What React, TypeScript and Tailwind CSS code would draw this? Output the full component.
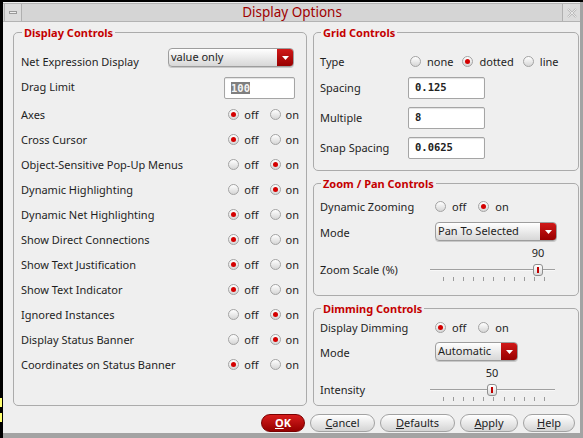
import React from "react";

const Radio = ({ checked }: { checked?: boolean }) => (
  <span className="w-[11px] h-[11px] rounded-full border border-[#a3a3a3] bg-linear-to-b from-white to-[#d6d6d6] flex items-center justify-center shrink-0">
    {checked && <span className="w-[5px] h-[5px] rounded-full bg-[#d40000]" />}
  </span>
);

const RadioGroup = ({
  options,
  value,
  gap = "gap-[11px]",
  inner = "gap-[5px]",
}: {
  options: string[];
  value: string;
  gap?: string;
  inner?: string;
}) => (
  <div className={`flex items-center ${gap}`}>
    {options.map((o) => (
      <div key={o} className={`flex items-center ${inner}`}>
        <Radio checked={o === value} />
        <span className="leading-[15px]">{o}</span>
      </div>
    ))}
  </div>
);

const Dropdown = ({ text, w }: { text: string; w: string }) => (
  <div className={`h-[19px] ${w} rounded-[4px] border border-[#9d9d9d] bg-linear-to-b from-white to-[#d7d7d7] flex items-stretch overflow-hidden shadow-[0_1px_0_#c8c8c8]`}>
    <span className="flex-1 pl-[2px] leading-[15px]">{text}</span>
    <span className="w-[16px] bg-linear-to-b from-[#d01818] to-[#980000] flex items-center justify-center">
      <svg width="7" height="4" viewBox="0 0 7 4">
        <path d="M0 0H7L3.5 4Z" fill="white" />
      </svg>
    </span>
  </div>
);

const Input = ({ text, w, selected }: { text: string; w: string; selected?: boolean }) => (
  <div className={`h-[22px] ${w} bg-white border border-[#a5a5a5] rounded-[2px] flex items-center pl-[6px] font-['DejaVu_Sans_Mono',monospace] text-[10.5px] font-bold text-[#222] shadow-[inset_0_1px_1px_rgba(0,0,0,0.12)]`}>
    {selected ? (
      <span className="bg-[#7f7f7f] text-[#f4f4f4] leading-[12px] px-[0px]">{text}</span>
    ) : (
      <span>{text}</span>
    )}
  </div>
);

const Slider = ({ value, pos }: { value: string; pos: number }) => (
  <div className="relative w-[125px] h-[38px]">
    <div
      className="absolute top-0 w-[20px] text-center leading-[13px]"
      style={{ left: pos - 10 }}
    >
      {value}
    </div>
    <div className="absolute left-0 right-0 top-[23px] h-[1px] bg-[#a0a0a0]" />
    <div className="absolute left-0 right-0 top-[24px] h-[1px] bg-[#f8f8f8]" />
    <div
      className="absolute top-[18px] w-[10px] h-[12px] rounded-[3px] border border-[#8e8e8e] bg-linear-to-b from-white to-[#d9d9d9] flex items-center justify-center"
      style={{ left: pos - 5 }}
    >
      <span className="w-[2px] h-[6px] bg-[#c00000]" />
    </div>
    <div className="absolute top-[31px] left-[13px] w-[102px] h-[4px] flex justify-between">
      {Array.from({ length: 11 }).map((_, i) => (
        <span key={i} className="w-[1px] h-[4px] bg-[#9a9a9a]" />
      ))}
    </div>
  </div>
);

const BinRow = ({ label, value }: { label: string; value: "off" | "on" }) => (
  <div className="h-[25px] flex items-center justify-between">
    <span className="mt-[2px]">{label}</span>
    <RadioGroup options={["off", "on"]} value={value} />
  </div>
);

const Legend = ({ children }: { children: React.ReactNode }) => (
  <legend className="px-[2px] ml-[1px] text-[11px] font-bold text-[#c40000] leading-[15px]">
    {children}
  </legend>
);

const Button = ({
  label,
  u,
  w,
  primary,
}: {
  label: string;
  u: number;
  w: string;
  primary?: boolean;
}) => (
  <div
    className={`h-[18px] ${w} rounded-full flex items-center justify-center border ${
      primary
        ? "bg-linear-to-b from-[#d81c1c] to-[#950000] border-[#7a0000] text-white font-bold"
        : "bg-linear-to-b from-white to-[#d4d4d4] border-[#a2a2a2] text-[#222]"
    }`}
  >
    <span>
      {label.slice(0, u)}
      <span className="underline">{label[u]}</span>
      {label.slice(u + 1)}
    </span>
  </div>
);

const leftRows: [string, "off" | "on"][] = [
  ["Axes", "off"],
  ["Cross Cursor", "off"],
  ["Object-Sensitive Pop-Up Menus", "on"],
  ["Dynamic Highlighting", "on"],
  ["Dynamic Net Highlighting", "off"],
  ["Show Direct Connections", "off"],
  ["Show Text Justification", "off"],
  ["Show Text Indicator", "off"],
  ["Ignored Instances", "on"],
  ["Display Status Banner", "on"],
  ["Coordinates on Status Banner", "off"],
];

export default function App() {
  return (
    <div className="w-[583px] h-[438px] bg-black flex font-['Noto_Sans',sans-serif] text-[11px] text-[#1e1e1e] overflow-hidden">
      <div className="w-[3px] flex flex-col">
        <div className="h-[398px]" />
        <div className="h-[9px] w-[2px] bg-[#ffff70]" />
        <div className="h-[6px]" />
        <div className="h-[9px] w-[2px] bg-[#ffff70]" />
      </div>
      <div className="flex-1 flex flex-col pt-[2px]">
        <div className="flex-1 flex flex-col bg-[#efefef] border-r-[3px] border-b-[5px] border-[#a3a3a3]">
          {/* title bar */}
          <div className="mt-[1px] h-[19px] flex items-stretch bg-[#d5d5d5] border-y border-[#b3b3b3]">
            <div className="w-[18px] ml-[1px] border-x border-[#b0b0b0] bg-[#dcdcdc] flex items-center justify-center">
              <span className="w-[8px] h-[3px] border border-[#9a9a9a] bg-[#eeeeee]" />
            </div>
            <div className="flex-1 flex items-center justify-center text-[13.5px] text-[#a00000] leading-none">
              Display Options
            </div>
            <div className="w-[18px] border-l border-[#b0b0b0] bg-[#dcdcdc] flex items-center justify-center">
              <svg width="10" height="10" viewBox="0 0 10 10">
                <path d="M1 1L9 9M9 1L1 9" stroke="#b8b8b8" strokeWidth="2" />
                <path d="M1 1L9 9M9 1L1 9" stroke="#f2f2f2" strokeWidth="0.8" />
              </svg>
            </div>
          </div>

          {/* content */}
          <div className="mt-[3px] ml-[10px] flex gap-[6px]">
            <fieldset className="w-[294px] h-[381px] border border-[#ababab] rounded-[5px] px-[7px] pt-[8px]">
              <Legend>Display Controls</Legend>
              <div className="h-[26px] flex items-start justify-between">
                <span className="mt-[6px]">Net Expression Display</span>
                <div className="mr-[5px]">
                  <Dropdown text="value only" w="w-[126px]" />
                </div>
              </div>
              <div className="h-[26px] flex items-center justify-between">
                <span>Drag Limit</span>
                <div className="mr-[4px] mt-[1px]">
                  <Input text="100" w="w-[71px]" selected />
                </div>
              </div>
              <div className="mt-[2px]">
                {leftRows.map(([l, v]) => (
                  <BinRow key={l} label={l} value={v} />
                ))}
              </div>
            </fieldset>

            <div className="w-[266px] flex flex-col gap-[5px]">
              <fieldset className="h-[146px] border border-[#ababab] rounded-[5px] px-[6px] pt-[10px]">
                <Legend>Grid Controls</Legend>
                <div className="h-[22px] flex items-center">
                  <span className="w-[90px] mt-[3px]">Type</span>
                  <RadioGroup
                    options={["none", "dotted", "line"]}
                    value="dotted"
                    gap="gap-[9px]"
                    inner="gap-[6px]"
                  />
                </div>
                {[
                  ["Spacing", "0.125", "mt-[5px]"],
                  ["Multiple", "8", "mt-[8px]"],
                  ["Snap Spacing", "0.0625", "mt-[8px]"],
                ].map(([l, v, m]) => (
                  <div key={l} className={`${m} h-[22px] flex items-center`}>
                    <span className="w-[88px]">{l}</span>
                    <Input text={v} w="w-[77px]" />
                  </div>
                ))}
              </fieldset>

              <fieldset className="h-[120px] border border-[#ababab] rounded-[5px] px-[6px] pt-[5px]">
                <Legend>Zoom / Pan Controls</Legend>
                <div className="h-[21px] flex items-center">
                  <span className="w-[115px] mt-[2px]">Dynamic Zooming</span>
                  <RadioGroup options={["off", "on"]} value="on" gap="gap-[12px]" inner="gap-[6px]" />
                </div>
                <div className="mt-[5px] h-[19px] flex items-center">
                  <span className="w-[115px] mt-[3px]">Mode</span>
                  <Dropdown text="Pan To Selected" w="w-[122px]" />
                </div>
                <div className="mt-[5px] flex items-start">
                  <span className="w-[110px] mt-[16px] leading-[15px]">Zoom Scale (%)</span>
                  <Slider value="90" pos={108} />
                </div>
              </fieldset>

              <fieldset className="h-[105px] border border-[#ababab] rounded-[5px] px-[6px] pt-[1px]">
                <Legend>Dimming Controls</Legend>
                <div className="h-[21px] flex items-center">
                  <span className="w-[115px] mt-[2px]">Display Dimming</span>
                  <RadioGroup options={["off", "on"]} value="off" gap="gap-[12px]" inner="gap-[6px]" />
                </div>
                <div className="mt-[4px] h-[19px] flex items-center">
                  <span className="w-[115px] mt-[3px]">Mode</span>
                  <Dropdown text="Automatic" w="w-[83px]" />
                </div>
                <div className="mt-[5px] flex items-start">
                  <span className="w-[110px] mt-[16px] leading-[15px]">Intensity</span>
                  <Slider value="50" pos={62} />
                </div>
              </fieldset>
            </div>
          </div>

          {/* buttons */}
          <div className="mt-[8px] mr-[5px] flex justify-end gap-[5px]">
            <Button label="OK" u={0} w="w-[44px]" primary />
            <Button label="Cancel" u={0} w="w-[65px]" />
            <Button label="Defaults" u={0} w="w-[75px]" />
            <Button label="Apply" u={0} w="w-[58px]" />
            <Button label="Help" u={0} w="w-[52px]" />
          </div>
        </div>
      </div>
    </div>
  );
}
